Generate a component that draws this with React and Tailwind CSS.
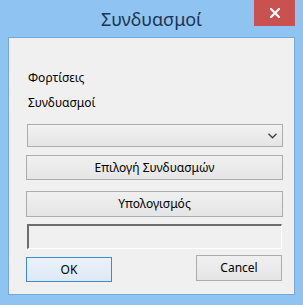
export default function App() {
  return (
    <div
      className="w-[303px] h-[305px] bg-[#8fc4f2] flex flex-col"
      style={{ fontFamily: '"Noto Sans", "DejaVu Sans", sans-serif' }}
    >
      {/* Title bar */}
      <div className="relative h-[37px] shrink-0 flex justify-center">
        <span className="mt-[7px] text-[18px] leading-[24px] text-[#1c3550]">Συνδυασμοί</span>
        <button className="absolute right-[8px] top-0 w-[41px] h-[26px] bg-[#c9514f] flex items-center justify-center">
          <svg width="10" height="10" viewBox="0 0 10 10">
            <path d="M1 1 L9 9 M9 1 L1 9" stroke="#fff" strokeWidth="2.2" strokeLinecap="square" />
          </svg>
        </button>
      </div>

      {/* Client area */}
      <div className="mx-[8px] h-[258px] border border-[#77a7d4] bg-[#f0f0f0] flex flex-col pl-[17px] pr-[10px] text-[12px] text-black">
        <span className="mt-[32px] ml-[2px] leading-[16px]">Φορτίσεις</span>
        <span className="mt-[9px] ml-[2px] leading-[16px]">Συνδυασμοί</span>

        {/* Combo */}
        <div className="mt-[13px] ml-[1px] w-[256px] h-[23px] border border-[#acacac] bg-gradient-to-b from-[#f2f2f2] to-[#e5e5e5] flex items-center justify-end pr-[5px]">
          <svg width="9" height="6" viewBox="0 0 9 6">
            <path d="M0.5 0.8 L4.5 4.8 L8.5 0.8" stroke="#444" strokeWidth="1.4" fill="none" />
          </svg>
        </div>

        <button className="mt-[8px] w-[257px] h-[25px] border border-[#acacac] bg-gradient-to-b from-[#f0f0f0] to-[#e5e5e5] leading-[16px]">
          Επιλογή Συνδυασμών
        </button>
        <button className="mt-[11px] w-[257px] h-[26px] border border-[#acacac] bg-gradient-to-b from-[#f0f0f0] to-[#e5e5e5] leading-[16px]">
          Υπολογισμός
        </button>

        {/* Text box */}
        <div className="mt-[7px] ml-[1px] w-[255px] h-[25px] border-t-2 border-l-2 border-t-[#6d6d6d] border-l-[#6d6d6d] border-b border-r border-b-white border-r-white bg-[#f0f0f0]" />

        {/* Bottom buttons */}
        <div className="mt-[6px] flex items-start justify-between w-[256px]">
          <button className="mt-[2px] w-[86px] h-[25px] border border-[#3c8ad6] bg-gradient-to-b from-[#eaf2fa] to-[#dde9f5] leading-[16px]">
            OK
          </button>
          <button className="w-[86px] h-[26px] border border-[#acacac] bg-gradient-to-b from-[#f0f0f0] to-[#e5e5e5] leading-[16px]">
            Cancel
          </button>
        </div>
      </div>
    </div>
  );
}
